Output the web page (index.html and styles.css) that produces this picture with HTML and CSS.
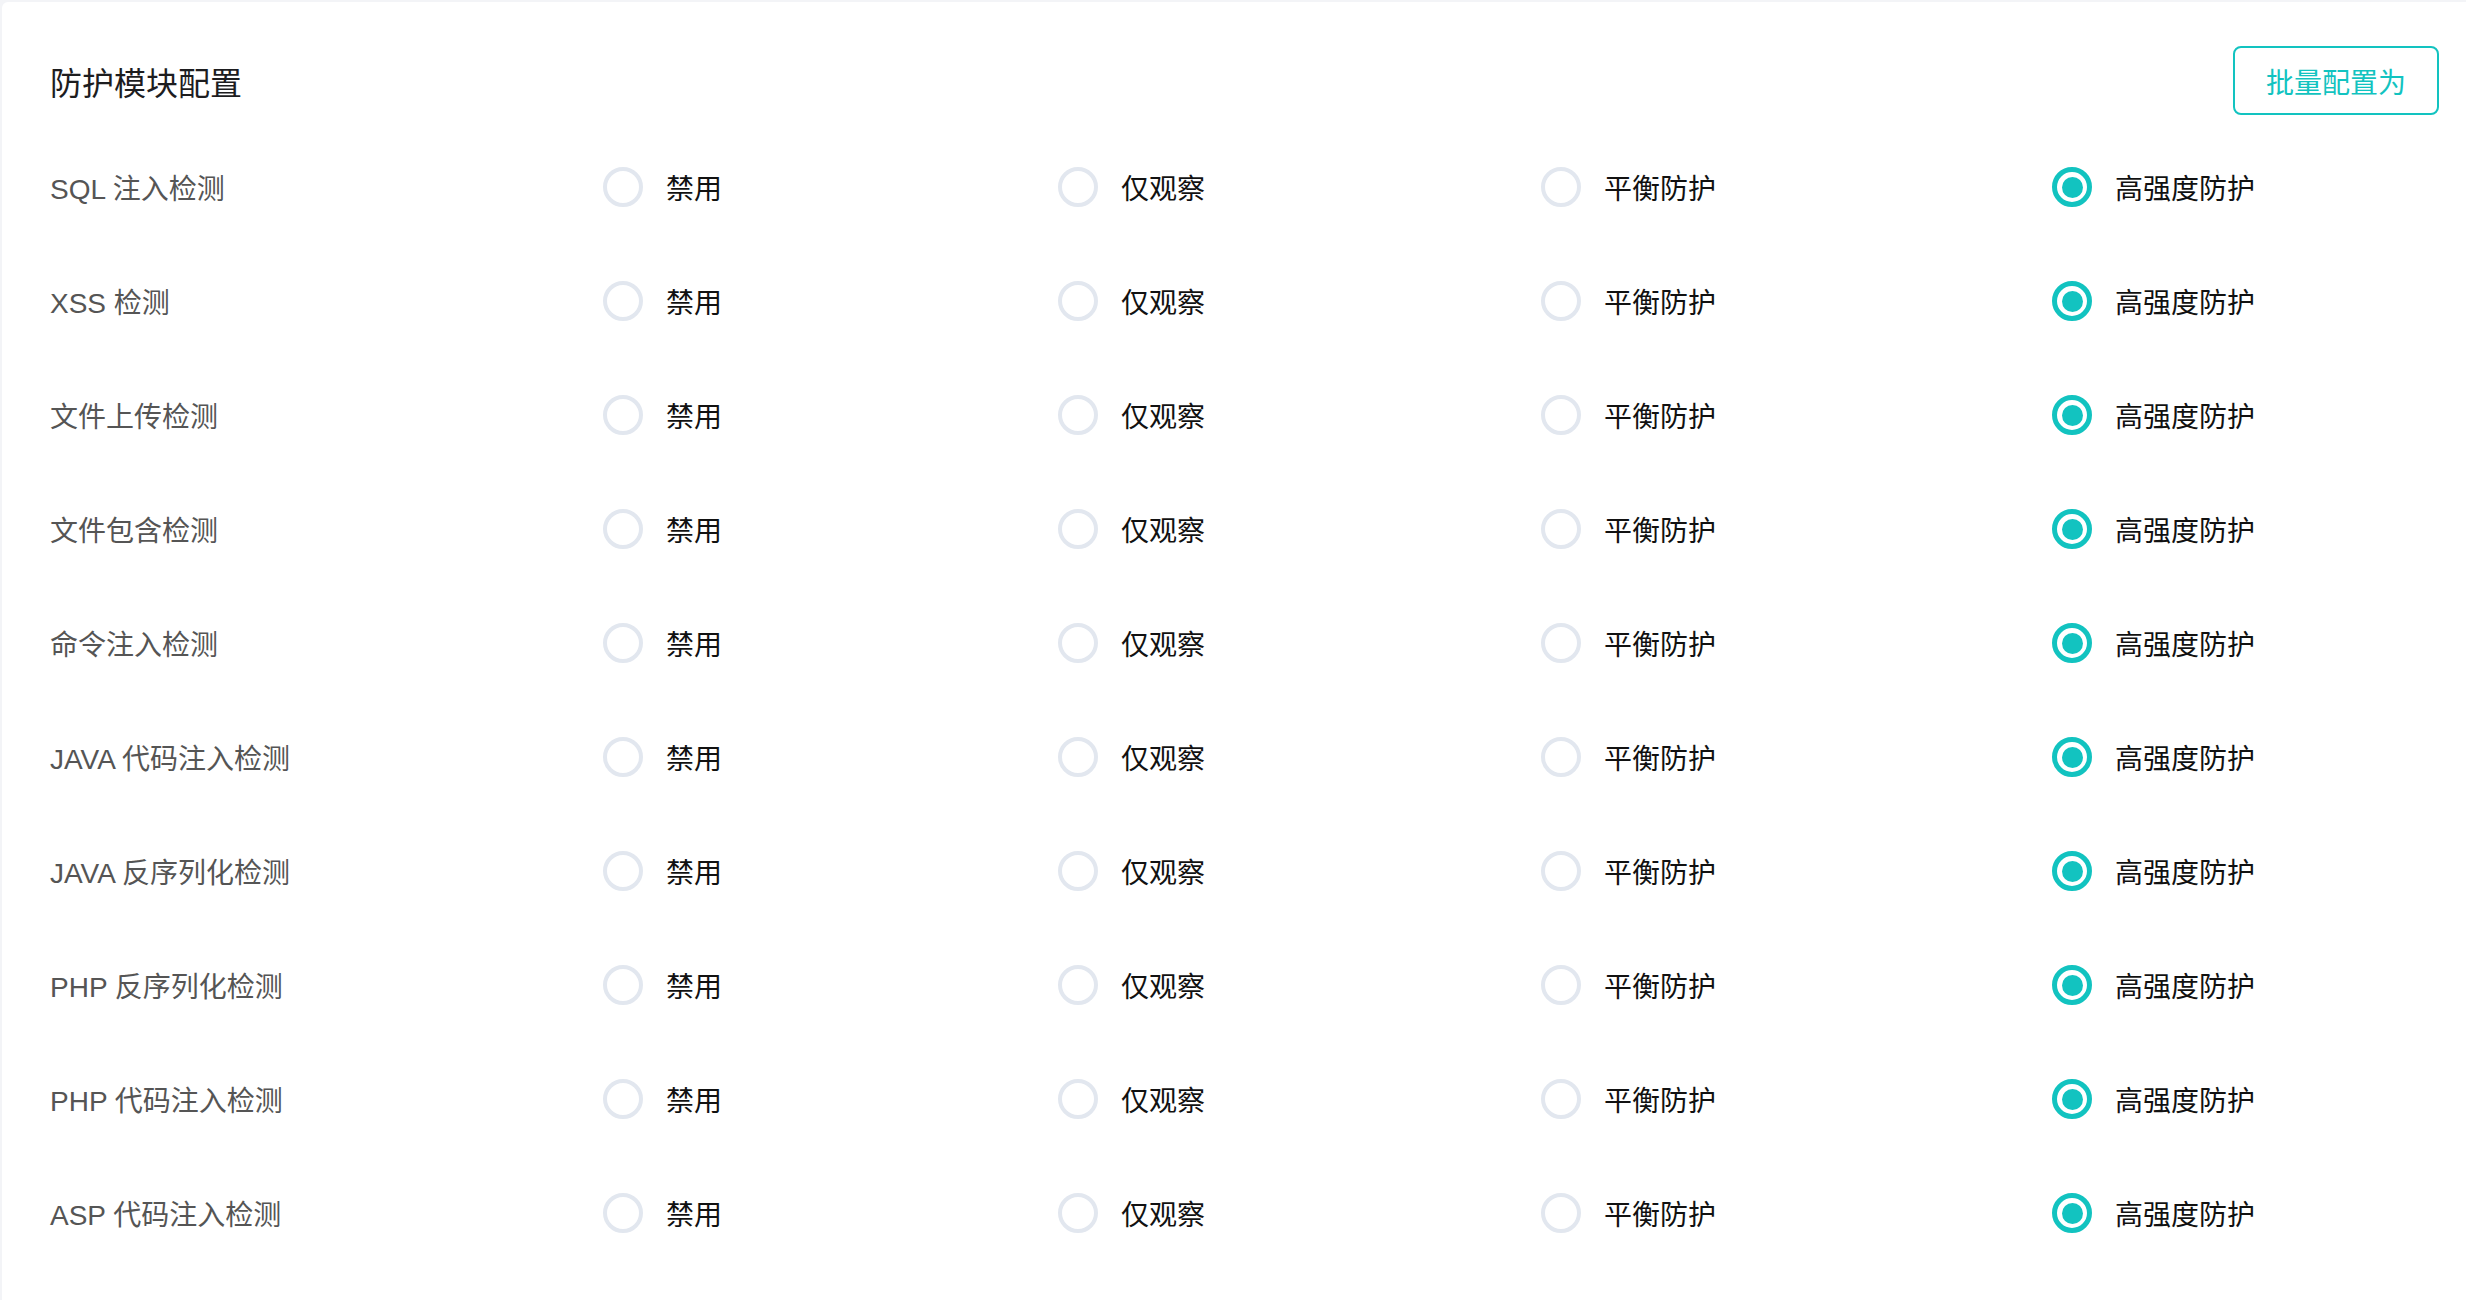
FILE: index.html
```html
<!DOCTYPE html>
<html lang="zh-CN">
<head>
<meta charset="utf-8">
<title>防护模块配置</title>
<link rel="stylesheet" href="styles.css">
</head>
<body>
<div class="card">
  <div class="header">
    <h2 class="title">防护模块配置</h2>
    <button class="batch-btn">批量配置为</button>
  </div>
  <div class="rows">
    <div class="row">
      <div class="label">SQL 注入检测</div>
      <div class="options">
        <label class="opt"><span class="radio"></span><span class="opt-text">禁用</span></label>
        <label class="opt"><span class="radio"></span><span class="opt-text">仅观察</span></label>
        <label class="opt"><span class="radio"></span><span class="opt-text">平衡防护</span></label>
        <label class="opt"><span class="radio checked"></span><span class="opt-text">高强度防护</span></label>
      </div>
    </div>
    <div class="row">
      <div class="label">XSS 检测</div>
      <div class="options">
        <label class="opt"><span class="radio"></span><span class="opt-text">禁用</span></label>
        <label class="opt"><span class="radio"></span><span class="opt-text">仅观察</span></label>
        <label class="opt"><span class="radio"></span><span class="opt-text">平衡防护</span></label>
        <label class="opt"><span class="radio checked"></span><span class="opt-text">高强度防护</span></label>
      </div>
    </div>
    <div class="row">
      <div class="label">文件上传检测</div>
      <div class="options">
        <label class="opt"><span class="radio"></span><span class="opt-text">禁用</span></label>
        <label class="opt"><span class="radio"></span><span class="opt-text">仅观察</span></label>
        <label class="opt"><span class="radio"></span><span class="opt-text">平衡防护</span></label>
        <label class="opt"><span class="radio checked"></span><span class="opt-text">高强度防护</span></label>
      </div>
    </div>
    <div class="row">
      <div class="label">文件包含检测</div>
      <div class="options">
        <label class="opt"><span class="radio"></span><span class="opt-text">禁用</span></label>
        <label class="opt"><span class="radio"></span><span class="opt-text">仅观察</span></label>
        <label class="opt"><span class="radio"></span><span class="opt-text">平衡防护</span></label>
        <label class="opt"><span class="radio checked"></span><span class="opt-text">高强度防护</span></label>
      </div>
    </div>
    <div class="row">
      <div class="label">命令注入检测</div>
      <div class="options">
        <label class="opt"><span class="radio"></span><span class="opt-text">禁用</span></label>
        <label class="opt"><span class="radio"></span><span class="opt-text">仅观察</span></label>
        <label class="opt"><span class="radio"></span><span class="opt-text">平衡防护</span></label>
        <label class="opt"><span class="radio checked"></span><span class="opt-text">高强度防护</span></label>
      </div>
    </div>
    <div class="row">
      <div class="label">JAVA 代码注入检测</div>
      <div class="options">
        <label class="opt"><span class="radio"></span><span class="opt-text">禁用</span></label>
        <label class="opt"><span class="radio"></span><span class="opt-text">仅观察</span></label>
        <label class="opt"><span class="radio"></span><span class="opt-text">平衡防护</span></label>
        <label class="opt"><span class="radio checked"></span><span class="opt-text">高强度防护</span></label>
      </div>
    </div>
    <div class="row">
      <div class="label">JAVA 反序列化检测</div>
      <div class="options">
        <label class="opt"><span class="radio"></span><span class="opt-text">禁用</span></label>
        <label class="opt"><span class="radio"></span><span class="opt-text">仅观察</span></label>
        <label class="opt"><span class="radio"></span><span class="opt-text">平衡防护</span></label>
        <label class="opt"><span class="radio checked"></span><span class="opt-text">高强度防护</span></label>
      </div>
    </div>
    <div class="row">
      <div class="label">PHP 反序列化检测</div>
      <div class="options">
        <label class="opt"><span class="radio"></span><span class="opt-text">禁用</span></label>
        <label class="opt"><span class="radio"></span><span class="opt-text">仅观察</span></label>
        <label class="opt"><span class="radio"></span><span class="opt-text">平衡防护</span></label>
        <label class="opt"><span class="radio checked"></span><span class="opt-text">高强度防护</span></label>
      </div>
    </div>
    <div class="row">
      <div class="label">PHP 代码注入检测</div>
      <div class="options">
        <label class="opt"><span class="radio"></span><span class="opt-text">禁用</span></label>
        <label class="opt"><span class="radio"></span><span class="opt-text">仅观察</span></label>
        <label class="opt"><span class="radio"></span><span class="opt-text">平衡防护</span></label>
        <label class="opt"><span class="radio checked"></span><span class="opt-text">高强度防护</span></label>
      </div>
    </div>
    <div class="row">
      <div class="label">ASP 代码注入检测</div>
      <div class="options">
        <label class="opt"><span class="radio"></span><span class="opt-text">禁用</span></label>
        <label class="opt"><span class="radio"></span><span class="opt-text">仅观察</span></label>
        <label class="opt"><span class="radio"></span><span class="opt-text">平衡防护</span></label>
        <label class="opt"><span class="radio checked"></span><span class="opt-text">高强度防护</span></label>
      </div>
    </div>
  </div>
</div>
</body>
</html>
```

FILE: styles.css
```css
* { box-sizing: border-box; }

html, body {
  margin: 0;
  padding: 0;
  height: 100%;
}

body {
  background: #f3f4f7;
  font-family: "Liberation Sans", "Noto Sans CJK SC", sans-serif;
  overflow: hidden;
}

.card {
  margin: 2px 0 0 2px;
  background: #ffffff;
  border-radius: 6px 0 0 0;
  padding: 44px 27px 40px 48px;
  min-height: 1310px;
}

.header {
  display: flex;
  align-items: center;
  justify-content: space-between;
  height: 69px;
}

.title {
  margin: 0;
  font-size: 32px;
  font-weight: 400;
  color: #1d1d1f;
  line-height: 1;
  font-family: "Noto Sans CJK SC", sans-serif;
}

.batch-btn {
  width: 206px;
  height: 69px;
  border: 2px solid #12c3c0;
  border-radius: 8px;
  background: #fff;
  color: #12c3c0;
  font-size: 28px;
  font-family: "Noto Sans CJK SC", sans-serif;
  cursor: pointer;
  padding: 0;
}

.rows {
  margin-top: 15px;
}

.row {
  display: flex;
  align-items: center;
  height: 114px;
}

.label {
  width: 553px;
  flex: none;
  font-size: 28px;
  color: #555555;
}

.options {
  display: flex;
  align-items: center;
  gap: 336px;
}

.opt {
  display: flex;
  align-items: center;
  gap: 23px;
  cursor: pointer;
}

.radio {
  width: 40px;
  height: 40px;
  border-radius: 50%;
  border: 4px solid #e2e7ef;
  background: #fff;
  flex: none;
  display: flex;
  align-items: center;
  justify-content: center;
}

.radio.checked {
  border: 5px solid #12c3c0;
}

.radio.checked::after {
  content: "";
  width: 21px;
  height: 21px;
  border-radius: 50%;
  background: #12c3c0;
}

.opt-text {
  font-size: 28px;
  color: #111111;
  font-family: "Noto Sans CJK SC", sans-serif;
  line-height: 1;
}
```
